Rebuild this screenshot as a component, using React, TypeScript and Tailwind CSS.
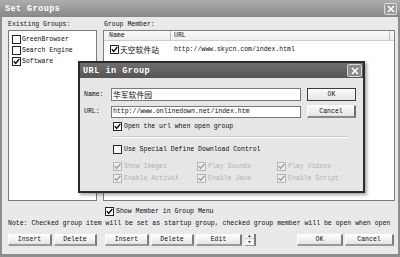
import React from "react";

function Box({ checked = false, disabled = false }: { checked?: boolean; disabled?: boolean }) {
  return (
    <span
      className={
        disabled
          ? "flex h-[9px] w-[9px] shrink-0 items-center justify-center border border-[#b6b6b6] bg-[#eeeeee]"
          : "flex h-[9px] w-[9px] shrink-0 items-center justify-center border border-[#262626] bg-white"
      }
    >
      {checked && (
        <svg width="7" height="7" viewBox="0 0 7 7">
          <path
            d="M0.8 3.3 L2.7 5.4 L6.3 1.1"
            fill="none"
            stroke={disabled ? "#a0a0a0" : "#111111"}
            strokeWidth="1.5"
          />
        </svg>
      )}
    </span>
  );
}

function CloseX({ box }: { box: string }) {
  return (
    <span className={box}>
      <svg width="8" height="8" viewBox="0 0 8 8">
        <path d="M1 1 L7 7 M7 1 L1 7" stroke="#ffffff" strokeWidth="1.6" />
      </svg>
    </span>
  );
}

const btn =
  "flex h-[12px] shrink-0 items-center justify-center border-t border-l border-t-white border-l-white border-r-2 border-b-2 border-r-[#7c7c7c] border-b-[#9a9a9a] bg-gradient-to-b from-[#fdfdfd] to-[#e4e4e4]";

export default function App() {
  return (
    <div className="relative flex h-[257px] w-[400px] flex-col overflow-hidden bg-[#8e8e8e] font-['Liberation_Mono',monospace] text-[6.5px] leading-[11px] text-[#0e0e0e]">
      {/* outer title bar */}
      <div className="flex h-[17px] shrink-0 items-center justify-between bg-gradient-to-b from-[#adadad] to-[#878787] pl-[5px] pr-[3px]">
        <span className="text-[8.4px] font-bold leading-[12px] tracking-[0.5px] text-white">Set Groups</span>
        <CloseX box="flex h-[12px] w-[13px] items-center justify-center rounded-[2px] border border-[#dcdcdc] bg-[#9a9a9a]" />
      </div>

      {/* body */}
      <div className="mx-[2px] mb-[3px] flex flex-1 flex-col bg-[#e9e9e9] pl-[6px] pr-[3px]">
        <div className="mt-[2px] flex h-[11px] shrink-0">
          <div className="w-[89px]">Existing Groups:</div>
          <div className="ml-[7px]">Group Member:</div>
        </div>

        <div className="flex h-[171px] shrink-0 gap-[6px]">
          {/* groups list */}
          <div className="flex w-[89px] flex-col border border-[#7c7c7c] bg-white pl-[3px] pt-[3px]">
            <div className="flex h-[11px] items-center gap-[1px]">
              <Box />
              <span>GreenBrowser</span>
            </div>
            <div className="flex h-[11px] items-center gap-[1px]">
              <Box />
              <span>Search Engine</span>
            </div>
            <div className="flex h-[11px] items-center gap-[1px]">
              <Box checked />
              <span>Software</span>
            </div>
          </div>

          {/* member list */}
          <div className="flex flex-1 flex-col border border-[#7c7c7c] bg-white">
            <div className="flex h-[10px] shrink-0 items-center border-b border-[#cfcfcf] bg-gradient-to-b from-[#fafafa] to-[#ececec] leading-[10px]">
              <div className="h-full w-[67px] border-r border-[#bdbdbd] pl-[5px]">Name</div>
              <div className="h-full w-[219px] border-r border-[#bdbdbd] pl-[3px]">URL</div>
            </div>
            <div className="mt-[3px] flex h-[11px] items-center">
              <div className="flex w-[70px] items-center pl-[6px]">
                <Box checked />
                <span className="ml-[1px] font-['Noto_Sans_CJK_SC',sans-serif] text-[7.8px] leading-[11px]">天空软件站</span>
              </div>
              <span>http://www.skycn.com/index.html</span>
            </div>
          </div>
        </div>

        <div className="ml-[97px] mt-[5px] flex h-[11px] shrink-0 items-center gap-[2px]">
          <Box checked />
          <span>Show Member in Group Menu</span>
        </div>

        <div className="mt-[1px] h-[11px] shrink-0 whitespace-nowrap">
          Note: Checked group item will be set as startup group, checked group member will be open when open
        </div>

        <div className="mt-[5px] flex shrink-0 items-center">
          <div className={`${btn} w-[44px]`}>Insert</div>
          <div className={`${btn} ml-[2px] w-[43px]`}>Delete</div>
          <div className={`${btn} ml-[8px] w-[44px]`}>Insert</div>
          <div className={`${btn} ml-[2px] w-[43px]`}>Delete</div>
          <div className={`${btn} ml-[2px] w-[46px]`}>Edit</div>
          <div className="ml-[3px] flex h-[12px] w-[11px] shrink-0 flex-col border-r-2 border-b border-r-[#7c7c7c] border-b-[#9a9a9a] bg-[#f4f4f4]">
            <div className="flex h-[5px] items-center justify-center border-b border-[#c8c8c8]">
              <svg width="3" height="2" viewBox="0 0 3 2">
                <path d="M0 2 L1.5 0 L3 2 Z" fill="#333" />
              </svg>
            </div>
            <div className="flex flex-1 items-center justify-center">
              <svg width="3" height="2" viewBox="0 0 3 2">
                <path d="M0 0 L1.5 2 L3 0 Z" fill="#333" />
              </svg>
            </div>
          </div>
          <div className={`${btn} ml-[41px] w-[46px]`}>OK</div>
          <div className={`${btn} ml-[2px] w-[49px]`}>Cancel</div>
        </div>
      </div>

      {/* URL in Group dialog */}
      <div className="absolute left-[78px] top-[61px] flex h-[132px] w-[287px] flex-col border-2 border-[#2c2c2c] bg-[#e6e6e6] shadow-[2px_2px_3px_rgba(0,0,0,0.35)]">
        <div className="flex h-[15px] shrink-0 items-center justify-between bg-gradient-to-b from-[#6e6e6e] to-[#555555] pl-[3px] pr-[1px]">
          <span className="text-[8.5px] font-bold leading-[12px] tracking-[0.5px] text-white">URL in Group</span>
          <CloseX box="flex h-[13px] w-[15px] items-center justify-center rounded-[2px] border border-[#d6d6d6] bg-[#8c8c8c]" />
        </div>

        <div className="flex flex-col pl-[4px]">
          <div className="mt-[10px] flex h-[13px] items-center">
            <span className="w-[27px]">Name:</span>
            <div className="flex h-[13px] w-[190px] items-center border border-[#7a7a7a] bg-white pl-[1px]">
              <span className="font-['Noto_Sans_CJK_SC',sans-serif] text-[7.8px] leading-[11px]">华军软件园</span>
            </div>
            <div className="ml-[6px] flex h-[13px] w-[49px] items-center justify-center border-[1.5px] border-[#3c3c3c] bg-gradient-to-b from-[#fbfbfb] to-[#e6e6e6]">
              OK
            </div>
          </div>
          <div className="mt-[4px] flex h-[13px] items-center">
            <span className="w-[27px]">URL:</span>
            <div className="flex h-[12px] w-[190px] items-center border border-[#7a7a7a] bg-white pl-[1px]">
              http://www.onlinedown.net/index.htm
            </div>
            <div className="ml-[6px] flex h-[13px] w-[49px] items-center justify-center border-t border-l border-t-white border-l-white border-r-2 border-b-2 border-r-[#6e6e6e] border-b-[#8a8a8a] bg-gradient-to-b from-[#fbfbfb] to-[#e4e4e4]">
              Cancel
            </div>
          </div>

          <div className="ml-[29px] mt-[3px] flex h-[11px] items-center gap-[2px]">
            <Box checked />
            <span>Open the url when open group</span>
          </div>

          <div className="ml-[29px] mt-[4px] h-[2px] w-[235px] border-t border-b border-t-[#c9c9c9] border-b-white" />

          <div className="ml-[29px] mt-[6px] flex h-[11px] items-center gap-[2px]">
            <Box />
            <span>Use Special Define Download Control</span>
          </div>

          <div className="ml-[29px] mt-[6px] flex h-[11px] items-center text-[#b2b2b2]">
            <div className="flex w-[84px] items-center gap-[2px]">
              <Box checked disabled />
              <span>Show Images</span>
            </div>
            <div className="flex w-[80px] items-center gap-[2px]">
              <Box checked disabled />
              <span>Play Sounds</span>
            </div>
            <div className="flex items-center gap-[2px]">
              <Box checked disabled />
              <span>Play Videos</span>
            </div>
          </div>
          <div className="ml-[29px] mt-[1px] flex h-[11px] items-center text-[#b2b2b2]">
            <div className="flex w-[84px] items-center gap-[2px]">
              <Box checked disabled />
              <span>Enable ActiveX</span>
            </div>
            <div className="flex w-[80px] items-center gap-[2px]">
              <Box checked disabled />
              <span>Enable Java</span>
            </div>
            <div className="flex items-center gap-[2px]">
              <Box checked disabled />
              <span>Enable Script</span>
            </div>
          </div>
        </div>
      </div>
    </div>
  );
}
